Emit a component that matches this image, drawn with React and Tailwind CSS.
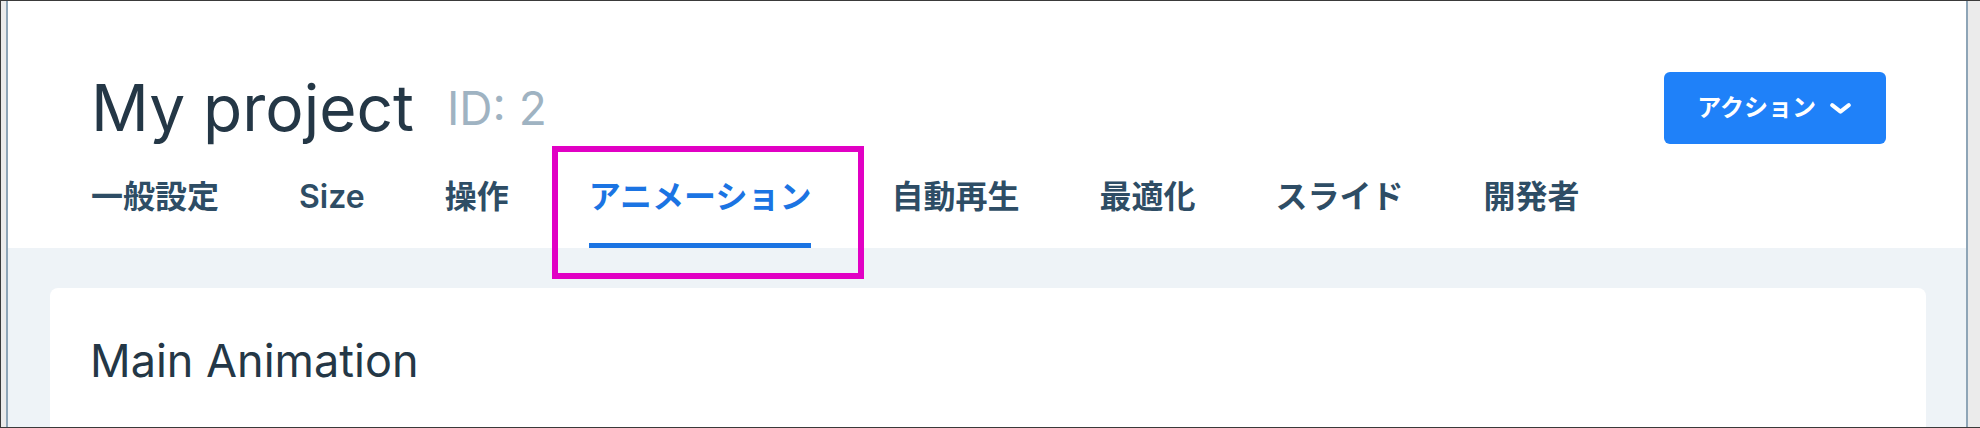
import { useState } from "react";

const tabs = ["一般設定", "Size", "操作", "アニメーション", "自動再生", "最適化", "スライド", "開発者"];

function Chevron() {
  return (
    <svg width="21" height="11" viewBox="0 0 21 11" fill="none" className="ml-[14px]">
      <path d="M2.2 2.2 L10.5 8.6 L18.8 2.2" stroke="white" strokeWidth="4" strokeLinecap="round" strokeLinejoin="round" />
    </svg>
  );
}

export default function App() {
  const [activeTab, setActiveTab] = useState("アニメーション");

  return (
    <div className="h-[428px] overflow-hidden border-y border-l border-[#3a3a3a] bg-[#ebebeb] pl-[5px] pr-[12px] font-[family-name:Inter,'Noto_Sans_CJK_JP',sans-serif]">
      <div className="h-full border-x-2 border-[#8ea5b7] bg-[#eef3f7]">
        {/* Header */}
        <header className="bg-white pl-[83px] pr-20 pt-[69px]">
          <div className="flex items-center justify-between">
            <div className="flex items-center">
              <h1 className="text-[64px] leading-[1.2] font-normal text-[#243746]">My project</h1>
              <span className="ml-[33px] text-[46px] leading-[1.2] text-[#9fb3c2]">ID: 2</span>
            </div>
            <button className="flex h-[72px] items-center rounded-md bg-[#1f81f9] pl-[33px] pr-[35px] text-[24px] font-bold text-white">
              アクション
              <Chevron />
            </button>
          </div>

          {/* Tabs */}
          <nav className="mt-[30px] flex gap-20">
            {tabs.map((tab) => {
              const isActive = tab === activeTab;
              return (
                <button
                  key={tab}
                  onClick={() => setActiveTab(tab)}
                  className={`relative border-b-[5px] pb-[26px] text-[32px] leading-10 font-semibold ${
                    isActive ? "border-[#1b74e3] text-[#1b74e3]" : "border-transparent text-[#2e4d65]"
                  }`}
                >
                  {tab}
                  {isActive && (
                    <span className="pointer-events-none absolute -left-[37px] -top-[31px] h-[133px] w-[312px] border-[6px] border-[#e100c4]" />
                  )}
                </button>
              );
            })}
          </nav>
        </header>

        {/* Content */}
        <main className="pl-[42px] pr-10 pt-10">
          <section className="h-[200px] rounded-lg bg-white px-10 pt-[46px]">
            <h2 className="text-[45px] leading-[1.2] font-normal text-[#243746]">Main Animation</h2>
          </section>
        </main>
      </div>
    </div>
  );
}
